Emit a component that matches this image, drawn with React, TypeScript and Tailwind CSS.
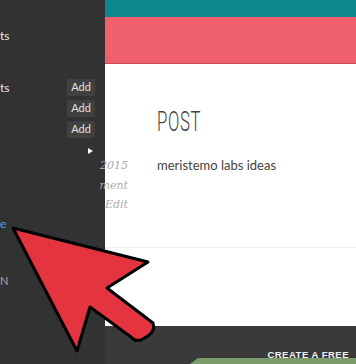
export default function App() {
  return (
    <div className="relative flex h-[364px] w-[356px] overflow-hidden bg-white font-['Lato','Noto_Sans',sans-serif]">
      {/* sidebar */}
      <aside className="flex w-[105px] shrink-0 flex-col bg-[#323232] text-[12px] text-[#e8e8e8]">
        <div className="mt-[28px] h-[16px] leading-[16px]">ts</div>
        <div className="mt-[35px] flex h-[17px] items-center justify-between pr-[10px]">
          <span>ts</span>
          <AddButton />
        </div>
        <div className="mt-[4px] flex justify-end pr-[10px]">
          <AddButton />
        </div>
        <div className="mt-[4px] flex justify-end pr-[10px]">
          <AddButton />
        </div>
        <div className="mt-[10px] flex justify-end pr-[12px]">
          <span className="h-0 w-0 border-y-[3px] border-l-[5px] border-y-transparent border-l-white" />
        </div>
        <div className="mt-[28px] h-px w-[3px] bg-[#999]" />
        <div className="mt-[35px] text-[12px] leading-[14px] text-[#4ba6dc]">e</div>
        <div className="mt-[43px] text-[11px] leading-[14px] text-[#aaa]">N</div>
        <div className="mt-[74px] text-[11px] leading-[14px] text-[#ccc]">s</div>
      </aside>

      {/* content */}
      <main className="flex flex-1 flex-col">
        <div className="h-[17px] bg-[#0c878c]" />
        <div className="h-[47px] border-b border-[#c94a5c] bg-[#f0606f]" />
        <div className="flex h-[184px] border-b border-[#efefef]">
          <div className="flex w-[23px] flex-col items-end pt-[95px] font-['DejaVu_Serif',serif] text-[11px] italic text-[#aaa]">
            <span className="h-[20px] leading-[14px]">2015</span>
            <span className="h-[19px] leading-[14px]">ment</span>
            <span className="leading-[14px]">Edit</span>
          </div>
          <div className="ml-[29px] flex flex-col pt-[43px]">
            <h1 className="w-[42px] origin-left scale-x-[0.62] whitespace-nowrap font-['Roboto',sans-serif] text-[27px] font-light leading-[30px] tracking-[1px] text-[#444]">
              POST
            </h1>
            <p className="mt-[20px] text-[13px] leading-[16px] text-[#444]">meristemo labs ideas</p>
          </div>
        </div>
        <div className="h-[78px]" />
        <div className="relative flex flex-1 flex-col items-end bg-[#3a3a3a] pr-[7px]">
          <span className="mt-[23px] font-['Liberation_Sans',sans-serif] text-[9.5px] font-bold leading-[11px] tracking-[0.5px] text-[#f2f2f2]">
            CREATE A FREE
          </span>
          <div className="absolute bottom-0 right-0 h-[6px] w-[166px] bg-[#7c9c6c] [clip-path:polygon(8px_0,100%_0,100%_100%,0_100%)]" />
        </div>
      </main>

      {/* red arrow overlay */}
      <svg className="pointer-events-none absolute left-0 top-0" width="356" height="364" viewBox="0 0 356 364">
        <path
          d="M13 228 L148 262 L107 288 L153 323 Q156 330 148 336 L141 340 Q135 342 131 337 L90 307 L77 351 Z"
          fill="#e3343f"
          stroke="#000"
          strokeWidth="3"
          strokeLinejoin="round"
        />
      </svg>
    </div>
  );
}

function AddButton() {
  return (
    <span className="flex h-[17px] w-[28px] items-center justify-center rounded-[2px] bg-[#404040] text-[11px] text-[#e0e0e0]">
      Add
    </span>
  );
}
